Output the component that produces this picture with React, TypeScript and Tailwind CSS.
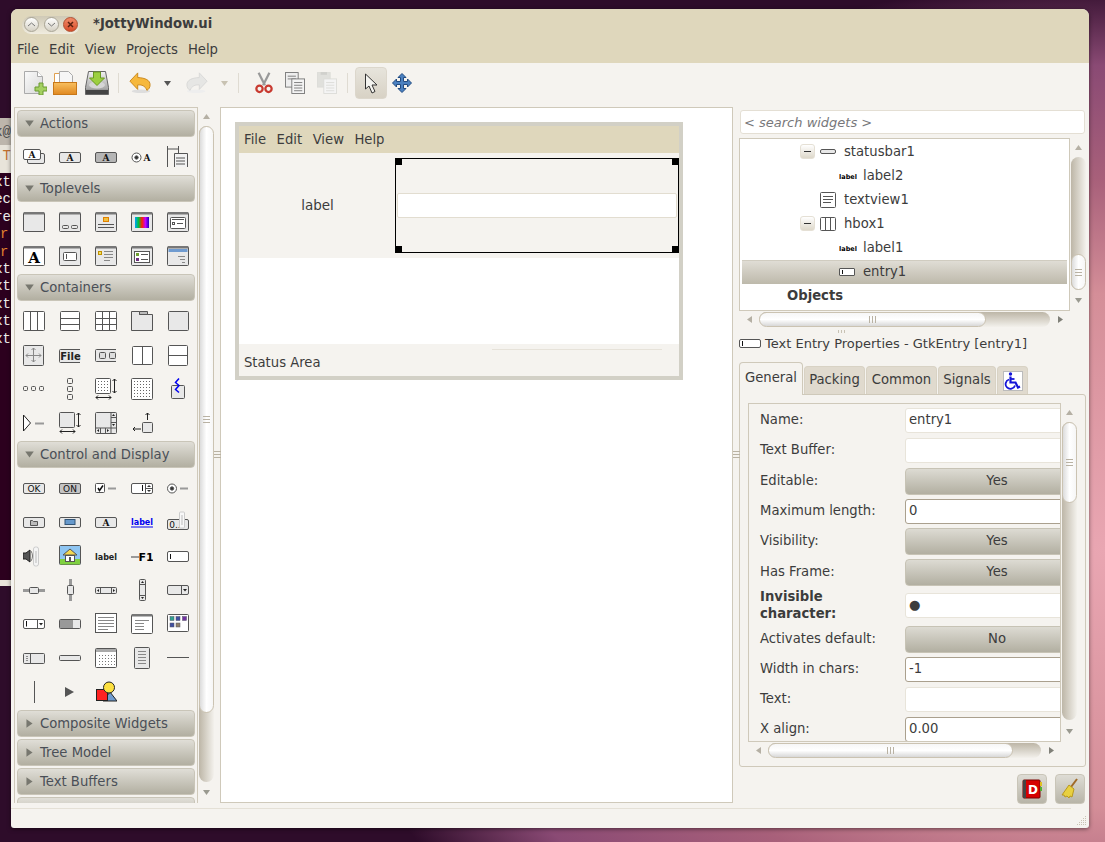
import type { ReactNode } from "react";

const line = "#555";
const soft = "#e8e8e8";

function Ico({ children, size = 22 }: { children: ReactNode; size?: number }) {
  return (
    <svg width={size} height={size} viewBox={`0 0 ${size} ${size}`} fill="none" stroke={line} strokeWidth="1">
      {children}
    </svg>
  );
}

function Letter({ x, y, t, s = 9, fill = "#111", w = 700, serif = false }: { x: number; y: number; t: string; s?: number; fill?: string; w?: number; serif?: boolean }) {
  return (
    <text
      x={x}
      y={y}
      fontSize={s}
      fontWeight={w}
      fontFamily={serif ? "DejaVu Serif, serif" : "DejaVu Sans, sans-serif"}
      fill={fill}
      stroke="none"
      textAnchor="middle"
    >
      {t}
    </text>
  );
}

function Win({ children, fill = soft }: { children?: ReactNode; fill?: string }) {
  return (
    <>
      <rect x=".5" y="1.5" width="21" height="19" rx="1" fill={fill} />
      <rect x="1" y="1" width="20" height="2.5" fill="#777" stroke="none" />
      {children}
    </>
  );
}

function Btn({ y = 6.5, h = 10, fill = soft }: { y?: number; h?: number; fill?: string }) {
  return <rect x=".5" y={y} width="21" height={h} rx="1.5" fill={fill} />;
}

const dots = (xs: number[], ys: number[], c = "#666") =>
  xs.flatMap((x) => ys.map((y) => <rect key={`${x}-${y}`} x={x} y={y} width="1" height="1" fill={c} stroke="none" />));

const actions: ReactNode[] = [
  <>
    <rect x="4.5" y="7.5" width="17" height="10" rx="1.5" fill={soft} />
    <rect x=".5" y="3.5" width="17" height="10" rx="1.5" fill="#fff" />
    <Letter x={9} y={12} t="A" serif />
  </>,
  <>
    <Btn />
    <Letter x={11} y={15} t="A" serif />
  </>,
  <>
    <Btn fill="#b5b5b5" />
    <Letter x={11} y={15} t="A" serif />
  </>,
  <>
    <circle cx="5.5" cy="11.5" r="4.5" fill="#fff" />
    <circle cx="5.5" cy="11.5" r="1.7" fill="#333" />
    <Letter x={16} y={15} t="A" serif />
  </>,
  <>
    <path d="M.5 0v21M.5 3h11M11.5 0v7" />
    <path d="M7.5 21V7.5h13V21" fill="#f2f2f2" />
    <path d="M9 12h9M9 15h9M9 18h9" />
  </>,
];

const toplevels: ReactNode[] = [
  <Win />,
  <Win>
    <rect x="3.5" y="14.5" width="6" height="3" rx="1" />
    <rect x="12.5" y="14.5" width="6" height="3" rx="1" />
  </Win>,
  <Win>
    <rect x="8.5" y="6.5" width="5" height="4" fill="#f0c040" stroke="#e08000" />
    <path d="M3 13.5h16M3 16.5h16" />
  </Win>,
  <Win>
    <defs>
      <linearGradient id="rainbow">
        <stop offset="0" stopColor="#00a0ff" />
        <stop offset=".25" stopColor="#00c040" />
        <stop offset=".5" stopColor="#ff2000" />
        <stop offset=".75" stopColor="#c000ff" />
        <stop offset="1" stopColor="#2000c0" />
      </linearGradient>
    </defs>
    <rect x="4" y="6" width="14" height="11" fill="url(#rainbow)" stroke="none" />
  </Win>,
  <Win>
    <rect x="3.5" y="6.5" width="15" height="11" rx="1" fill="#fff" />
    <rect x="5.5" y="11.5" width="2" height="2" />
    <path d="M5 8.5h12M10 12.5h6" />
  </Win>,
  <Win fill="#fff">
    <Letter x={11} y={18} t="A" s={15} fill="#000" w={800} serif />
  </Win>,
  <Win>
    <rect x="4.5" y="7.5" width="13" height="8" rx="1" fill="#fff" />
    <path d="M7.5 9v5" />
  </Win>,
  <Win>
    <rect x="3.5" y="6.5" width="3" height="3" fill="#f0e060" stroke="#c09000" />
    <path d="M9 6.5h9M9 9.5h9M9 12.5h9M9 15.5h6" stroke="#888" />
  </Win>,
  <Win>
    <rect x="3.5" y="6.5" width="15" height="11" fill="#fff" />
    <rect x="5" y="8" width="3" height="3" fill="#70a030" stroke="none" />
    <rect x="5" y="13" width="3" height="3" fill="#703080" stroke="none" />
    <path d="M10 9.5h7M10 14.5h7" />
  </Win>,
  <Win>
    <rect x="1.5" y="4" width="19" height="3" fill="#6f9bd0" stroke="none" />
    <path d="M11 11.5h7M13 14.5h5M15 17.5h3" stroke="#888" />
  </Win>,
];

const containers: ReactNode[] = [
  <>
    <rect x=".5" y="1.5" width="21" height="19" rx="1" fill="#fff" />
    <path d="M7.5 2v18M14.5 2v18" />
  </>,
  <>
    <rect x="1.5" y="1.5" width="19" height="19" rx="1" fill="#fff" />
    <path d="M1 8.5h20M1 14.5h20" />
  </>,
  <>
    <rect x=".5" y="1.5" width="21" height="19" rx="1" fill="#fff" />
    <path d="M7.5 2v18M14.5 2v18M1 8.5h20M1 14.5h20" />
  </>,
  <>
    <path d="M.5 1.5h8v3h13v16H.5z" fill={soft} />
    <path d="M8.5 1.5h8v3h-8z" fill="#bbb" />
  </>,
  <rect x="1.5" y="1.5" width="20" height="19" rx="1" fill={soft} />,
  <>
    <rect x=".5" y="1.5" width="20" height="20" rx="1" fill={soft} />
    <path d="M10.5 4v14M3 11.5h15M8.5 6l2-2 2 2M8.5 16l2 2 2-2M5 9.5l-2 2 2 2M16 9.5l2 2-2 2" stroke="#888" />
  </>,
  <>
    <path d="M21 5.5H1.5a1 1 0 0 0-1 1v11a1 1 0 0 0 1 1H21" fill={soft} />
    <Letter x={11.5} y={16} t="File" s={10} fill="#222" w={800} />
  </>,
  <>
    <path d="M21 5.5H1.5a1 1 0 0 0-1 1v10a1 1 0 0 0 1 1H21" fill={soft} />
    <rect x="4.5" y="8.5" width="6" height="6" rx="1" fill="#ddd" />
    <rect x="14.5" y="8.5" width="6" height="6" rx="1" fill="#ddd" />
  </>,
  <>
    <rect x="1.5" y="2.5" width="20" height="18" rx="1" fill="#fff" />
    <path d="M11.5 3v17" />
  </>,
  <>
    <rect x="1.5" y="1.5" width="19" height="20" rx="1" fill="#fff" />
    <path d="M2 11.5h18" />
  </>,
  <>
    <rect x=".5" y="8.5" width="4" height="4" rx="1" />
    <rect x="8.5" y="8.5" width="4" height="4" rx="1" />
    <rect x="16.5" y="8.5" width="4" height="4" rx="1" />
  </>,
  <>
    <rect x="8.5" y=".5" width="5" height="5" rx="1" />
    <rect x="8.5" y="8.5" width="5" height="5" rx="1" />
    <rect x="8.5" y="16.5" width="5" height="5" rx="1" />
  </>,
  <>
    <rect x=".5" y=".5" width="15" height="15" rx="1" fill="#fff" />
    {dots([3, 6, 9, 12], [3, 6, 9, 12])}
    <path d="M19.5 1v14M17.5 3l2-2 2 2M17.5 13l2 2 2-2M1 19.5h15M3 17.5l-2 2 2 2M14 17.5l2 2-2 2" stroke="#222" />
  </>,
  <>
    <rect x=".5" y=".5" width="21" height="21" rx="1" fill="#fff" />
    {dots([3, 6, 9, 12, 15, 18], [3, 6, 9, 12, 15, 18])}
  </>,
  <>
    <rect x="4.5" y="7.5" width="13" height="13" rx="1" fill={soft} />
    <path d="M12 .5l-3.5 4 3.5 3-3.5 4 3.5 3" stroke="#0000f0" strokeWidth="1.5" />
  </>,
  <>
    <path d="M.5 3v16l7-8z" fill="#fff" stroke="#222" />
    <path d="M12 11.5h9" stroke="#999" strokeWidth="2" />
  </>,
  <>
    <rect x=".5" y=".5" width="15" height="15" rx="1" fill={soft} />
    <path d="M19.5 1v14M17.5 3l2-2 2 2M17.5 13l2 2 2-2M1 19.5h15M3 17.5l-2 2 2 2M14 17.5l2 2-2 2" stroke="#222" />
  </>,
  <>
    <rect x=".5" y=".5" width="21" height="21" rx="1" fill={soft} />
    <path d="M16 1v20M1 16h20M16 5.5h5M16 10.5h5M5.5 16v5M10.5 16v5" />
    <path d="M17 4l1.5-2 1.5 2zM17 12l1.5 2 1.5-2zM4 17l-2 1.5 2 1.5zM12 17l2 1.5-2 1.5z" fill="#222" stroke="none" />
  </>,
  <>
    <rect x="11.5" y="10.5" width="10" height="10" rx="1" fill={soft} />
    <path d="M16.5 8V1M14.5 3l2-2 2 2M10 17H2M4 15l-2 2 2 2" stroke="#222" />
  </>,
];

const controls: ReactNode[] = [
  <>
    <Btn />
    <Letter x={11} y={15} t="OK" s={9} w={400} />
  </>,
  <>
    <Btn fill="#c4c4c4" />
    <Letter x={11} y={15} t="ON" s={9} w={400} />
  </>,
  <>
    <rect x=".5" y="6.5" width="9" height="9" rx="1" fill="#fff" />
    <path d="M3 11l1.5 2.5L8 8.5" stroke="#111" strokeWidth="1.5" />
    <path d="M13 11.5h8" stroke="#999" strokeWidth="2" />
  </>,
  <>
    <Btn fill="#fff" />
    <path d="M11.5 8v6" stroke="#111" />
    <path d="M14.5 7v9" />
    <path d="M16 10l2-2 2 2zM16 13l2 2 2-2z" fill="#333" stroke="none" />
    <path d="M15 11.5h6" />
  </>,
  <>
    <circle cx="5" cy="11.5" r="4.5" fill="#fff" />
    <circle cx="5" cy="11.5" r="1.7" fill="#333" />
    <path d="M13 11.5h8" stroke="#999" strokeWidth="2" />
  </>,
  <>
    <Btn />
    <path d="M7.5 9.5h2l1 1h4v4h-7z" fill="#bbb" />
  </>,
  <>
    <Btn />
    <rect x="6" y="8.5" width="10" height="5" fill="#6699cc" stroke="#335577" />
  </>,
  <>
    <Btn />
    <Letter x={11} y={15} t="A" serif />
  </>,
  <>
    <Letter x={11} y={14} t="label" s={8} fill="#0000f0" w={800} />
    <path d="M0 16h22" stroke="#0000f0" />
  </>,
  <>
    <Btn y={8.5} h={10} />
    <Letter x={8} y={17} t="0.." s={9} w={400} />
    <rect x="12.5" y="1" width="5" height="16" fill="#f8f8f8" stroke="#ccc" rx="1" />
    <path d="M15 4v10" stroke="#bbb" />
  </>,
  <>
    <path d="M0 8h3l4-3v12l-4-3H0z" fill="#555" stroke="#222" />
    <path d="M8 6c2 3 2 7 0 10" stroke="#777" />
    <rect x="10.5" y="2" width="5" height="19" rx="2" fill="#f4f4f4" stroke="#ccc" />
    <path d="M13 6v12" stroke="#bbb" />
  </>,
  <>
    <rect x=".5" y=".5" width="21" height="19" rx="1" fill="#8ec5f2" />
    <rect x="1" y="14" width="20" height="5.5" fill="#7fd040" stroke="none" />
    <path d="M4 10l7-6 7 6z" fill="#f4d850" stroke="#555" />
    <rect x="6.5" y="10.5" width="9" height="6" fill="#fff" />
    <rect x="10" y="12" width="2" height="5" fill="#555" stroke="none" />
  </>,
  <Letter x={11} y={15} t="label" s={8} fill="#222" w={800} />,
  <>
    <path d="M0 12h8" stroke="#999" strokeWidth="2" />
    <Letter x={15} y={16} t="F1" s={11} fill="#000" w={800} />
  </>,
  <>
    <Btn fill="#fff" />
    <path d="M3.5 9v5" stroke="#111" />
  </>,
  <>
    <path d="M0 11.5h22" stroke="#999" strokeWidth="3" />
    <rect x="6.5" y="8.5" width="9" height="6" rx="1" fill={soft} />
  </>,
  <>
    <path d="M11.5 0v22" stroke="#999" strokeWidth="3" />
    <rect x="8.5" y="6.5" width="6" height="9" rx="1" fill={soft} />
  </>,
  <>
    <rect x=".5" y="8.5" width="21" height="6" rx="1" fill={soft} />
    <path d="M5.5 9v5M16.5 9v5" />
    <path d="M4 10l-2 1.5 2 1.5zM18 10l2 1.5-2 1.5z" fill="#222" stroke="none" />
  </>,
  <>
    <rect x="8.5" y=".5" width="6" height="21" rx="1" fill={soft} />
    <path d="M9 5.5h5M9 16.5h5" />
    <path d="M10 4l1.5-2 1.5 2zM10 18l1.5 2 1.5-2z" fill="#222" stroke="none" />
  </>,
  <>
    <Btn y={6.5} h={9} />
    <path d="M14.5 7v8" />
    <path d="M16 10h4l-2 2.5z" fill="#222" stroke="none" />
  </>,
  <>
    <Btn y={6.5} h={9} fill="#fff" />
    <path d="M3.5 8v5.5" stroke="#111" />
    <path d="M14.5 7v8" />
    <path d="M16 10h4l-2 2.5z" fill="#222" stroke="none" />
  </>,
  <>
    <rect x=".5" y="6.5" width="21" height="9" rx="1" fill={soft} />
    <rect x="1" y="7" width="13" height="8" fill="#999" stroke="none" />
  </>,
  <>
    <rect x=".5" y=".5" width="21" height="19" fill="#fff" />
    <path d="M3 4.5h16M3 7.5h16M3 10.5h16M3 13.5h16M3 16.5h10" stroke="#888" />
  </>,
  <Win fill="#fff">
    <path d="M4 7.5h14M4 10.5h9M4 13.5h9M4 16.5h9" stroke="#888" />
  </Win>,
  <>
    <rect x=".5" y="1.5" width="21" height="17" rx="1" fill="#fff" />
    <rect x="3" y="3.5" width="4" height="4" fill="#30a090" stroke="#556" strokeWidth=".5" />
    <rect x="9" y="3.5" width="4" height="4" fill="#404fa0" stroke="#556" strokeWidth=".5" />
    <rect x="15.5" y="3.5" width="4" height="4" fill="#7030a0" stroke="#556" strokeWidth=".5" />
    <rect x="3" y="10" width="4" height="4" fill="#404fa0" stroke="#556" strokeWidth=".5" />
    <rect x="9" y="10" width="4" height="4" fill="#90806a" stroke="#556" strokeWidth=".5" />
  </>,
  <>
    <rect x=".5" y="6.5" width="21" height="10" rx="1" fill={soft} />
    <path d="M7.5 7v9" />
    <path d="M4 9v1M4 11v1M4 13v1" stroke="#333" />
  </>,
  <rect x=".5" y="8.5" width="21" height="5" rx="1" fill={soft} />,
  <>
    <rect x=".5" y="1.5" width="21" height="19" rx="1" fill="#fff" />
    <rect x="1" y="2" width="20" height="3" fill="#aaa" stroke="none" />
    {dots([4, 7, 10, 13, 16, 19], [8, 11, 14, 17], "#777")}
  </>,
  <>
    <rect x="3.5" y=".5" width="15" height="21" rx="1" fill={soft} />
    <path d="M7 4.5h8M7 7.5h8M7 10.5h8M7 13.5h8M7 16.5h8" stroke="#888" />
  </>,
  <path d="M0 10.5h22" />,
  <path d="M11.5 0v22" />,
  <path d="M6 6v10l9-5z" fill="#555" stroke="none" />,
  <>
    <path d="M15 11l-7 9h14z" fill="#6f9bd0" stroke="#222" />
    <rect x="1.5" y="8.5" width="11" height="11" fill="#f22" stroke="#222" />
    <circle cx="14" cy="6.5" r="5.5" fill="#fde040" stroke="#222" />
  </>,
];

function Grip({ vertical = false }: { vertical?: boolean }) {
  return vertical ? (
    <div className="flex gap-[2px]">
      <span className="w-px h-[7px] bg-[#b9b2a3]" />
      <span className="w-px h-[7px] bg-[#b9b2a3]" />
      <span className="w-px h-[7px] bg-[#b9b2a3]" />
    </div>
  ) : (
    <div className="flex flex-col gap-[2px]">
      <span className="w-[7px] h-px bg-[#b9b2a3]" />
      <span className="w-[7px] h-px bg-[#b9b2a3]" />
      <span className="w-[7px] h-px bg-[#b9b2a3]" />
    </div>
  );
}

function Arrow({ dir, color = "#8a8a80", size = 9 }: { dir: "up" | "down" | "left" | "right"; color?: string; size?: number }) {
  const d = {
    up: "M1 7h7L4.5 2z",
    down: "M1 2h7L4.5 7z",
    left: "M7 1v7L2 4.5z",
    right: "M2 1v7l5-3.5z",
  }[dir];
  return (
    <svg width={size} height={size} viewBox="0 0 9 9">
      <path d={d} fill={color} />
    </svg>
  );
}

function VScroll({ className, top, thumb, track }: { className: string; top: string; thumb: string; track: string }) {
  return (
    <div className={`flex flex-col items-center w-[16px] ${className}`}>
      <div className="h-[19px] flex items-center"><Arrow dir="up" color="#b5b0a4" /></div>
      <div className={`w-[15px] rounded-full bg-gradient-to-r from-[#bdb6a7] to-[#f3f1ec] ${track}`}>
        <div className={`${top} ${thumb} w-[15px] rounded-full border border-[#cbc3b2] bg-gradient-to-r from-[#dcdcdc] via-white to-[#f6f6f6] flex items-center justify-center`}>
          <Grip />
        </div>
      </div>
      <div className="flex-1 flex items-center"><Arrow dir="down" color="#9a9a90" /></div>
    </div>
  );
}

function HScroll({ className, thumb, track }: { className: string; thumb: string; track: string }) {
  return (
    <div className={`flex items-center h-[16px] ${className}`}>
      <div className="w-[20px] flex justify-center"><Arrow dir="left" color="#b5b0a4" /></div>
      <div className={`h-[15px] rounded-full bg-gradient-to-b from-[#bdb6a7] to-[#f3f1ec] ${track}`}>
        <div className={`${thumb} h-[15px] rounded-full border border-[#cbc3b2] bg-gradient-to-b from-[#f6f6f6] via-white to-[#d8d8d8] flex items-center justify-center`}>
          <Grip vertical />
        </div>
      </div>
      <div className="w-[20px] flex justify-center"><Arrow dir="right" color="#808078" /></div>
    </div>
  );
}

function Section({ title, open, icons }: { title: string; open?: boolean; icons?: ReactNode[] }) {
  return (
    <>
      <div className="shrink-0 h-[27px] rounded-[4px] border border-[#c9c5b8] bg-gradient-to-b from-[#e0ded7] to-[#b2afa1] flex items-center">
        <span className="w-[22px] flex justify-center">
          <Arrow dir={open ? "down" : "right"} color="#77776f" size={11} />
        </span>
        <span className="text-[#4a4f57]">{title}</span>
      </div>
      {icons && (
        <div className="shrink-0 -ml-px grid grid-cols-[repeat(5,36px)] auto-rows-[34px]">
          {icons.map((ic, i) => (
            <div key={i} className="flex items-center justify-center pt-[1px]">
              <Ico>{ic}</Ico>
            </div>
          ))}
        </div>
      )}
    </>
  );
}

function NewDoc() {
  return (
    <svg width="24" height="24" viewBox="0 0 24 24">
      <defs>
        <linearGradient id="page" x1="0" y1="0" x2="1" y2="1">
          <stop offset="0" stopColor="#fafafa" />
          <stop offset="1" stopColor="#d8d8d8" />
        </linearGradient>
      </defs>
      <path d="M1.5.5h13l5 5v17h-18z" fill="url(#page)" stroke="#aaa" />
      <path d="M14.5.5v5h5" fill="#fff" stroke="#aaa" />
      <path d="M16 12h4v4h4v4h-4v4h-4v-4h-4v-4h4z" fill="#a4d060" stroke="#6a9a30" />
    </svg>
  );
}

function OpenFolder() {
  return (
    <svg width="24" height="24" viewBox="0 0 24 24">
      <defs>
        <linearGradient id="folder" x1="0" y1="0" x2="0" y2="1">
          <stop offset="0" stopColor="#f8c060" />
          <stop offset="1" stopColor="#e08820" />
        </linearGradient>
      </defs>
      <path d="M1.5 2.5h6v10h-6z" fill="#fff" stroke="#e0a050" />
      <path d="M6.5.5h9l4 4v10h-13z" fill="#f6f6f6" stroke="#aaa" />
      <rect x=".5" y="11.5" width="23" height="12" fill="url(#folder)" stroke="#c87818" />
    </svg>
  );
}

function SaveDrive() {
  return (
    <svg width="24" height="24" viewBox="0 0 24 24">
      <defs>
        <linearGradient id="drive" x1="0" y1="0" x2="0" y2="1">
          <stop offset="0" stopColor="#f2f2f2" />
          <stop offset=".75" stopColor="#a8a8a8" />
          <stop offset="1" stopColor="#555" />
        </linearGradient>
      </defs>
      <path d="M3.5.5h17l3 16v7h-23v-7z" fill="url(#drive)" stroke="#666" />
      <rect x="1" y="19" width="22" height="4" fill="#444" />
      <ellipse cx="12" cy="14" rx="8" ry="3.5" fill="#d6d6d6" />
      <path d="M8.5 1h7v6h4L12 14.5 4.5 7h4z" fill="#9ccf40" stroke="#6a9a20" />
    </svg>
  );
}

function Curve({ flip, gray }: { flip?: boolean; gray?: boolean }) {
  return (
    <svg width="22" height="24" viewBox="0 0 24 24" className={flip ? "-scale-x-100" : ""}>
      <ellipse cx="13" cy="21" rx="10" ry="2" fill={gray ? "#eee" : "#ddd"} />
      <path
        d="M9.5 1L1 10l8.5 9v-5c4 0 8 .5 10 6 2-1 3.500-3 3.500-6 0-5-5-7.500-13.500-8z"
        fill={gray ? "#e6e6e4" : "#f6b83c"}
        stroke={gray ? "#d8d8d6" : "#c88418"}
      />
    </svg>
  );
}

function Scissors() {
  return (
    <svg width="18" height="24" viewBox="0 0 20 24" fill="none">
      <path d="M4 .5l7 14M16 .5l-7 14" stroke="#999" strokeWidth="2.5" />
      <circle cx="5" cy="18.5" r="3.5" stroke="#c83a30" strokeWidth="2.5" />
      <circle cx="15" cy="18.5" r="3.5" stroke="#c83a30" strokeWidth="2.5" />
    </svg>
  );
}

function CopyIcon({ paste }: { paste?: boolean }) {
  const c = paste ? "#dcdcd8" : "#777";
  return (
    <svg width="20" height="22" viewBox="0 0 22 24">
      <rect x=".5" y=".5" width="14" height="16" fill={paste ? "#e0e0dc" : "#eee"} stroke={c} />
      {!paste && <path d="M3 4.5h9M3 7.5h9" stroke={c} />}
      {paste && <rect x="4" y="0" width="7" height="3" fill="#d0d0cc" />}
      <rect x="7.5" y="7.5" width="14" height="16" fill="#f4f4f4" stroke={c} />
      <path d="M10 11.5h9M10 14.5h9M10 17.5h9M10 20.5h9" stroke={c} />
    </svg>
  );
}

function Cursor() {
  return (
    <svg width="15" height="21" viewBox="0 0 15 21">
      <path d="M1.5 1v15l3.5-3 3 7 3-1.500-3-6.500h5z" fill="#f4f4f0" stroke="#333" />
    </svg>
  );
}

function MoveIcon() {
  return (
    <svg width="20" height="20" viewBox="0 0 20 20">
      <path
        d="M10 .5l4 4h-2.5v4h4V6l4 4-4 4v-2.5h-4v4H14l-4 4-4-4h2.5v-4h-4V14l-4-4 4-4v2.5h4v-4H6z"
        fill="#4a80c0"
        stroke="#204a80"
      />
    </svg>
  );
}

function TreeGlyph({ kind }: { kind: string }) {
  if (kind === "label")
    return (
      <svg width="18" height="10" viewBox="0 0 18 10">
        <text x="9" y="7.5" fontSize="6.5" fontWeight="800" fontFamily="DejaVu Sans, sans-serif" fill="#000" textAnchor="middle">
          label
        </text>
      </svg>
    );
  if (kind === "status")
    return <div className="w-[16px] h-[5px] rounded-[2px] border border-[#555] bg-[#e8e8e8]" />;
  if (kind === "text")
    return (
      <svg width="16" height="16" viewBox="0 0 16 16" fill="none" stroke="#555">
        <rect x=".5" y=".5" width="15" height="15" rx="1" />
        <path d="M3 4.5h10M3 7.5h10M3 10.5h8" />
      </svg>
    );
  if (kind === "hbox")
    return (
      <svg width="16" height="16" viewBox="0 0 16 16" fill="none" stroke="#555">
        <rect x=".5" y="1.5" width="15" height="13" rx="1" />
        <path d="M5.5 2v12M10.5 2v12" />
      </svg>
    );
  return (
    <div className="w-[16px] h-[8px] rounded-[1px] border border-[#555] bg-white flex items-center pl-[2px]">
      <span className="w-px h-[4px] bg-[#111]" />
    </div>
  );
}

type TreeRow = { name: string; kind: string; depth: "a" | "b"; expander?: boolean; selected?: boolean };

const tree: TreeRow[] = [
  { name: "statusbar1", kind: "status", depth: "a", expander: true },
  { name: "label2", kind: "label", depth: "b" },
  { name: "textview1", kind: "text", depth: "a" },
  { name: "hbox1", kind: "hbox", depth: "a", expander: true },
  { name: "label1", kind: "label", depth: "b" },
  { name: "entry1", kind: "entry", depth: "b", selected: true },
];

type Prop = { label: string; kind: "entry" | "focus" | "button"; value?: string; row: string; bold?: boolean };

const props: Prop[] = [
  { label: "Name:", kind: "entry", value: "entry1", row: "h-[30px]" },
  { label: "Text Buffer:", kind: "entry", row: "h-[30px]" },
  { label: "Editable:", kind: "button", value: "Yes", row: "h-[31px]" },
  { label: "Maximum length:", kind: "focus", value: "0", row: "h-[29px]" },
  { label: "Visibility:", kind: "button", value: "Yes", row: "h-[31px]" },
  { label: "Has Frame:", kind: "button", value: "Yes", row: "h-[34px]" },
  { label: "Invisible character:", kind: "entry", value: "●", row: "h-[33px]", bold: true },
  { label: "Activates default:", kind: "button", value: "No", row: "h-[31px]" },
  { label: "Width in chars:", kind: "focus", value: "-1", row: "h-[30px]" },
  { label: "Text:", kind: "entry", row: "h-[30px]" },
  { label: "X align:", kind: "focus", value: "0.00", row: "h-[30px]" },
];

function PropRow({ p }: { p: Prop }) {
  return (
    <div className={`${p.row} shrink-0 flex items-start`}>
      <div className={`${p.kind === "button" ? "h-[27px]" : "h-[25px]"} w-[145px] shrink-0 flex items-center pb-[2px]`}>
        <span className={p.bold ? "font-bold w-[120px] leading-[17px]" : ""}>{p.label}</span>
      </div>
      {p.kind === "button" ? (
        <div className="w-[184px] shrink-0 h-[27px] rounded-[4px] border border-[#c7c3b5] bg-gradient-to-b from-[#dddbd3] to-[#b2afa1] flex items-center justify-center pb-[1px]">
          {p.value}
        </div>
      ) : (
        <div
          className={`w-[184px] shrink-0 h-[25px] rounded-[3px] border bg-white flex items-center pl-[3px] pb-[2px] ${
            p.kind === "focus" ? "border-[#aaa08e]" : "border-[#e8e4da]"
          }`}
        >
          {p.value}
        </div>
      )}
    </div>
  );
}

export default function App() {
  return (
    <div className="relative w-[1105px] h-[842px] overflow-hidden font-['DejaVu_Sans',sans-serif] text-[13.2px] text-[#3c3c3c] bg-[#2e0c2a] bg-[radial-gradient(ellipse_800px_570px_at_1105px_550px,#e9a6b2_0%,#d48e98_45%,#a8607a_65%,#8a4a74_85%,#2e0c2a_100%)]">
      {/* terminal behind the window */}
      <div className="absolute left-0 top-[118px] w-[11px] h-[468px] overflow-hidden bg-[#e8e4da] font-['Liberation_Mono',monospace] text-[14px] leading-[17.4px]">
        <div className="h-[27px] bg-[#bdb6ac] flex justify-end items-center pt-[2px] text-[#4c4c4c]">
          <span>k@</span>
        </div>
        <div className="h-[28px] flex justify-end pt-[3px] text-[#c07030]">
          <span>T</span>
        </div>
        <div className="h-[407px] bg-[#2c001e] text-[#eeeeec] flex flex-col items-end pt-[1px]">
          <span>xt</span>
          <span>ec</span>
          <span>re</span>
          <span className="text-[#e08030] self-start">r</span>
          <span className="text-[#e08030] self-start">r</span>
          <span>xt</span>
          <span>xt</span>
          <span>xt</span>
          <span>xt</span>
          <span>xt</span>
        </div>
      </div>

      {/* main window */}
      <div className="absolute left-[11px] top-[9px] w-[1078px] h-[819px] flex flex-col rounded-t-[7px] rounded-b-[3px] overflow-hidden bg-[#f5f3ef] shadow-[0_1px_4px_rgba(0,0,0,0.5)]">
        <div className="h-[31px] shrink-0 flex items-center bg-[#dfd7bc]">
          <div className="ml-[11px] w-[58px] h-[18px] rounded-full bg-gradient-to-b from-[#cfc9b6] to-[#f0ecdf] flex items-center justify-between px-[2px]">
            <div className="w-[15px] h-[15px] rounded-full border border-[#a9a596] bg-gradient-to-b from-white to-[#d5d1c4] flex items-center justify-center">
              <svg width="9" height="9" viewBox="0 0 9 9" fill="none" stroke="#777"><path d="M1 6l3.5-3L8 6" /></svg>
            </div>
            <div className="w-[15px] h-[15px] rounded-full border border-[#a9a596] bg-gradient-to-b from-white to-[#d5d1c4] flex items-center justify-center">
              <svg width="9" height="9" viewBox="0 0 9 9" fill="none" stroke="#777"><path d="M1 3l3.5 3L8 3" /></svg>
            </div>
            <div className="w-[15px] h-[15px] rounded-full border border-[#b05030] bg-gradient-to-b from-[#f08a68] to-[#d84a28] flex items-center justify-center">
              <svg width="9" height="9" viewBox="0 0 9 9" fill="none" stroke="#5a2010" strokeWidth="1.5"><path d="M2 2l5 5M7 2l-5 5" /></svg>
            </div>
          </div>
          <span className="ml-[13px] pb-[2px] font-bold text-[#3c3c3c]">*JottyWindow.ui</span>
        </div>
        <div className="h-[23px] shrink-0 bg-[#dfd7bc] flex items-center pl-[6px] pb-[4px] gap-[10px]">
          <span>File</span>
          <span>Edit</span>
          <span>View</span>
          <span>Projects</span>
          <span>Help</span>
        </div>

        <div className="h-[40px] shrink-0 flex items-center pl-[12px]">
          <div className="w-[30px]"><NewDoc /></div>
          <div className="w-[32px]"><OpenFolder /></div>
          <div className="w-[24px]"><SaveDrive /></div>
          <span className="ml-[9px] w-px h-[20px] bg-[#dfdbd2]" />
          <div className="ml-[10px] w-[24px]"><Curve /></div>
          <div className="ml-[10px] w-[20px]"><Arrow dir="down" color="#555" /></div>
          <div className="ml-[3px] w-[24px]"><Curve flip gray /></div>
          <div className="ml-[10px] w-[14px]"><Arrow dir="down" color="#c8c2b2" /></div>
          <span className="ml-[4px] w-px h-[20px] bg-[#dfdbd2]" />
          <div className="ml-[14px] w-[20px] flex justify-end"><Scissors /></div>
          <div className="ml-[10px] w-[22px] flex justify-end"><CopyIcon /></div>
          <div className="ml-[10px] w-[22px] flex justify-end"><CopyIcon paste /></div>
          <span className="ml-[10px] w-px h-[20px] bg-[#dfdbd2]" />
          <div className="ml-[7px] w-[32px] h-[32px] rounded-[4px] border border-[#dcd7cc] bg-gradient-to-b from-[#e7e4dc] to-[#d8d2c5] flex items-center justify-center">
            <Cursor />
          </div>
          <div className="ml-[5px]"><MoveIcon /></div>
        </div>

        <div className="flex-1 min-h-0 flex pt-[4px] pl-[3px]">
          {/* palette */}
          <div className="w-[184px] h-[696px] shrink-0 border border-b-0 border-[#cfc9ba] pl-[2px] pr-[2px] pt-[2px] flex flex-col gap-[2px] overflow-hidden">
            <Section title="Actions" open icons={actions} />
            <Section title="Toplevels" open icons={toplevels} />
            <Section title="Containers" open icons={containers} />
            <Section title="Control and Display" open icons={controls} />
            <Section title="Composite Widgets" />
            <Section title="Tree Model" />
            <Section title="Text Buffers" />
            <div className="shrink-0 h-[27px] rounded-[4px] border border-[#c9c5b8] bg-gradient-to-b from-[#e0ded7] to-[#b2afa1]" />
          </div>
          <VScroll className="h-[696px]" top="mt-0" thumb="h-[587px]" track="h-[656px]" />

          <div className="w-[6px] shrink-0 relative">
            <div className="absolute top-[344px] left-0"><Grip /></div>
          </div>

          {/* designer */}
          <div className="w-[513px] h-[696px] shrink-0 bg-white border border-[#cfc9ba] pl-[14px] pt-[14px]">
            <div className="w-[448px] h-[258px] border-[4px] border-[#d2d0c6] flex flex-col">
              <div className="h-[27px] shrink-0 bg-[#dfd7bc] flex items-center pl-[5px] gap-[10.5px]">
                <span>File</span>
                <span>Edit</span>
                <span>View</span>
                <span>Help</span>
              </div>
              <div className="h-[105px] shrink-0 bg-[#f5f3ef] flex">
                <div className="w-[156px] flex items-center justify-center pl-[1px] text-[13.5px]">label</div>
                <div className="relative mt-[5px] w-[284px] h-[95px] border border-black flex items-center px-px">
                  <div className="w-full h-[25px] rounded-[2px] border border-[#e2ddd0] bg-white" />
                  <span className="absolute -left-px -top-px w-[7px] h-[7px] bg-black" />
                  <span className="absolute -right-px -top-px w-[7px] h-[7px] bg-black" />
                  <span className="absolute -left-px -bottom-px w-[7px] h-[7px] bg-black" />
                  <span className="absolute -right-px -bottom-px w-[7px] h-[7px] bg-black" />
                </div>
              </div>
              <div className="h-[86px] shrink-0 bg-white" />
              <div className="flex-1 bg-[#f5f3ef] relative flex flex-col pl-[5px]">
                <div className="mt-[5px] ml-[248px] w-[170px] h-px bg-[#e6e2d9]" />
                <span className="mt-[3px]">Status Area</span>
              </div>
            </div>
          </div>

          <div className="w-[6px] shrink-0 relative">
            <div className="absolute top-[344px] left-0"><Grip /></div>
          </div>

          {/* widget tree and properties */}
          <div className="w-[347px] shrink-0 flex flex-col pt-[3px]">
            <div className="ml-px w-[345px] h-[24px] shrink-0 rounded-[3px] border border-[#e4dfd4] bg-white flex items-center pl-[3px] pt-px italic text-[13px] text-[#77777a]">
              &lt; search widgets &gt;
            </div>
            <div className="mt-[4px] h-[173px] shrink-0 flex">
              <div className="w-[331px] shrink-0 border border-[#cfc9ba] bg-white px-[2px] py-px">
                {tree.map((r) => (
                  <div
                    key={r.name}
                    className={`h-[24px] flex items-center relative ${
                      r.selected ? "pb-[2px] bg-gradient-to-b from-[#e0ddd5] to-[#bdb9ab] border-t border-[#d0ccc0]" : "pb-px"
                    }`}
                  >
                    {r.expander && (
                      <div className="absolute left-[58px] w-[15px] h-[15px] rounded-[3px] border border-[#e5e0d5] bg-gradient-to-b from-white to-[#ded8ca] flex items-center justify-center">
                        <span className="w-[7px] h-px bg-[#333]" />
                      </div>
                    )}
                    <div className={r.depth === "a" ? "ml-[78px] w-[24px]" : "ml-[97px] w-[24px]"}>
                      <TreeGlyph kind={r.kind} />
                    </div>
                    <span>{r.name}</span>
                  </div>
                ))}
                <div className="h-[24px] flex items-center pl-[45px] pb-px font-bold">Objects</div>
              </div>
              <VScroll className="h-[173px]" top="mt-[97px]" thumb="h-[36px]" track="h-[133px]" />
            </div>
            <HScroll className="w-[331px]" thumb="w-[227px]" track="w-[291px]" />
            <div className="h-[8px] shrink-0 flex items-center justify-center w-[346px] pr-[150px]">
              <div className="flex gap-[2px] ml-[8px]">
                <span className="w-px h-[3px] bg-[#c8c2b4]" />
                <span className="w-px h-[3px] bg-[#c8c2b4]" />
                <span className="w-px h-[3px] bg-[#c8c2b4]" />
              </div>
            </div>
            <div className="h-[16px] shrink-0 flex items-center">
              <div className="w-[22px] h-[9px] rounded-[2px] border border-[#555] bg-white flex items-center pl-[2px] mr-[4px]">
                <span className="w-px h-[5px] bg-[#111]" />
              </div>
              <span className="text-[13px] pt-px">Text Entry Properties - GtkEntry [entry1]</span>
            </div>

            <div className="mt-[10px] h-[33px] shrink-0 flex items-end">
              <div className="w-[64px] h-[33px] rounded-t-[4px] border border-b-0 border-[#cfc9ba] bg-[#f5f3ef] flex items-center justify-center z-10 -mb-px pb-[2px]">General</div>
              <div className="w-[61px] ml-px h-[28px] rounded-t-[4px] border border-b-0 border-[#d8d2c4] bg-[#e0dace] flex items-center justify-center pb-px">Packing</div>
              <div className="w-[71px] ml-px h-[28px] rounded-t-[4px] border border-b-0 border-[#d8d2c4] bg-[#e0dace] flex items-center justify-center pb-px">Common</div>
              <div className="w-[58px] ml-px h-[28px] rounded-t-[4px] border border-b-0 border-[#d8d2c4] bg-[#e0dace] flex items-center justify-center pb-px">Signals</div>
              <div className="w-[31px] ml-px h-[28px] rounded-t-[4px] border border-b-0 border-[#d8d2c4] bg-[#e0dace] flex items-center justify-center">
                <div className="w-[20px] h-[20px] bg-white border border-[#bbb] flex items-center justify-center">
                  <svg width="18" height="18" viewBox="0 0 18 18" fill="none" stroke="#1515d8" strokeWidth="1.8">
                    <circle cx="6.5" cy="2" r="1.7" fill="#1515d8" stroke="none" />
                    <path d="M6.5 4.5v6h5l2.5 5 2-1" strokeWidth="2.2" />
                    <path d="M6.5 7h4" />
                    <path d="M5 7.5a4.8 4.8 0 1 0 6 6" />
                  </svg>
                </div>
              </div>
            </div>
            <div className="h-[373px] w-[347px] shrink-0 border border-[#cfc9ba] rounded-b-[3px] rounded-tr-[3px] pl-[8px] pt-[8px]">
              <div className="flex h-[339px]">
                <div className="w-[313px] shrink-0 h-[339px] border border-[#cfc9ba] overflow-hidden pl-[11px] pt-[4px] pr-[2px]">
                  {props.map((p) => (
                    <PropRow key={p.label} p={p} />
                  ))}
                </div>
                <VScroll className="h-[339px]" top="mt-0" thumb="h-[81px]" track="h-[298px]" />
              </div>
              <HScroll className="w-[313px]" thumb="w-[245px]" track="w-[273px]" />
            </div>
            <div className="mt-[7px] pr-[1px] flex justify-end gap-[8px]">
              <div className="w-[30px] h-[30px] rounded-[4px] border border-[#c9c5b8] bg-gradient-to-b from-[#dedcd5] to-[#b8b5a8] flex items-center justify-center">
                <svg width="20" height="20" viewBox="0 0 20 20">
                  <rect x="1" y="1" width="17" height="18" rx="1" fill="#d60000" stroke="#7a0000" />
                  <rect x="1" y="1" width="3" height="18" fill="#444" />
                  <rect x="18" y="3" width="2" height="4" fill="#e0c020" />
                  <rect x="18" y="8" width="2" height="4" fill="#50b030" />
                  <text x="11" y="15" fontSize="12" fontWeight="800" fontFamily="DejaVu Sans, sans-serif" fill="#fff" textAnchor="middle">D</text>
                </svg>
              </div>
              <div className="w-[30px] h-[30px] rounded-[4px] border border-[#c9c5b8] bg-gradient-to-b from-[#dedcd5] to-[#b8b5a8] flex items-center justify-center">
                <svg width="20" height="22" viewBox="0 0 20 22">
                  <path d="M17 1l-6 8" stroke="#a06a28" strokeWidth="2" />
                  <path d="M9 7l5 4-2 8-2-1-1 2-2-2-2 1-1-2-2 0z" fill="#e8d040" stroke="#b89820" />
                </svg>
              </div>
            </div>
          </div>
        </div>

        {/* status bar */}
        <div className="h-[20px] shrink-0 relative">
          <div className="mr-[18px] h-px bg-[#e4e0d6]" />
          <svg className="absolute right-[2px] bottom-[2px]" width="10" height="10" viewBox="0 0 10 10">
            {[[8, 0], [6, 2], [8, 2], [4, 4], [6, 4], [8, 4], [2, 6], [4, 6], [6, 6], [8, 6], [0, 8], [2, 8], [4, 8], [6, 8], [8, 8]].map(([x, y]) => (
              <rect key={`${x}-${y}`} x={x} y={y} width="1" height="1" fill="#c9c3b4" />
            ))}
          </svg>
        </div>
      </div>
    </div>
  );
}
